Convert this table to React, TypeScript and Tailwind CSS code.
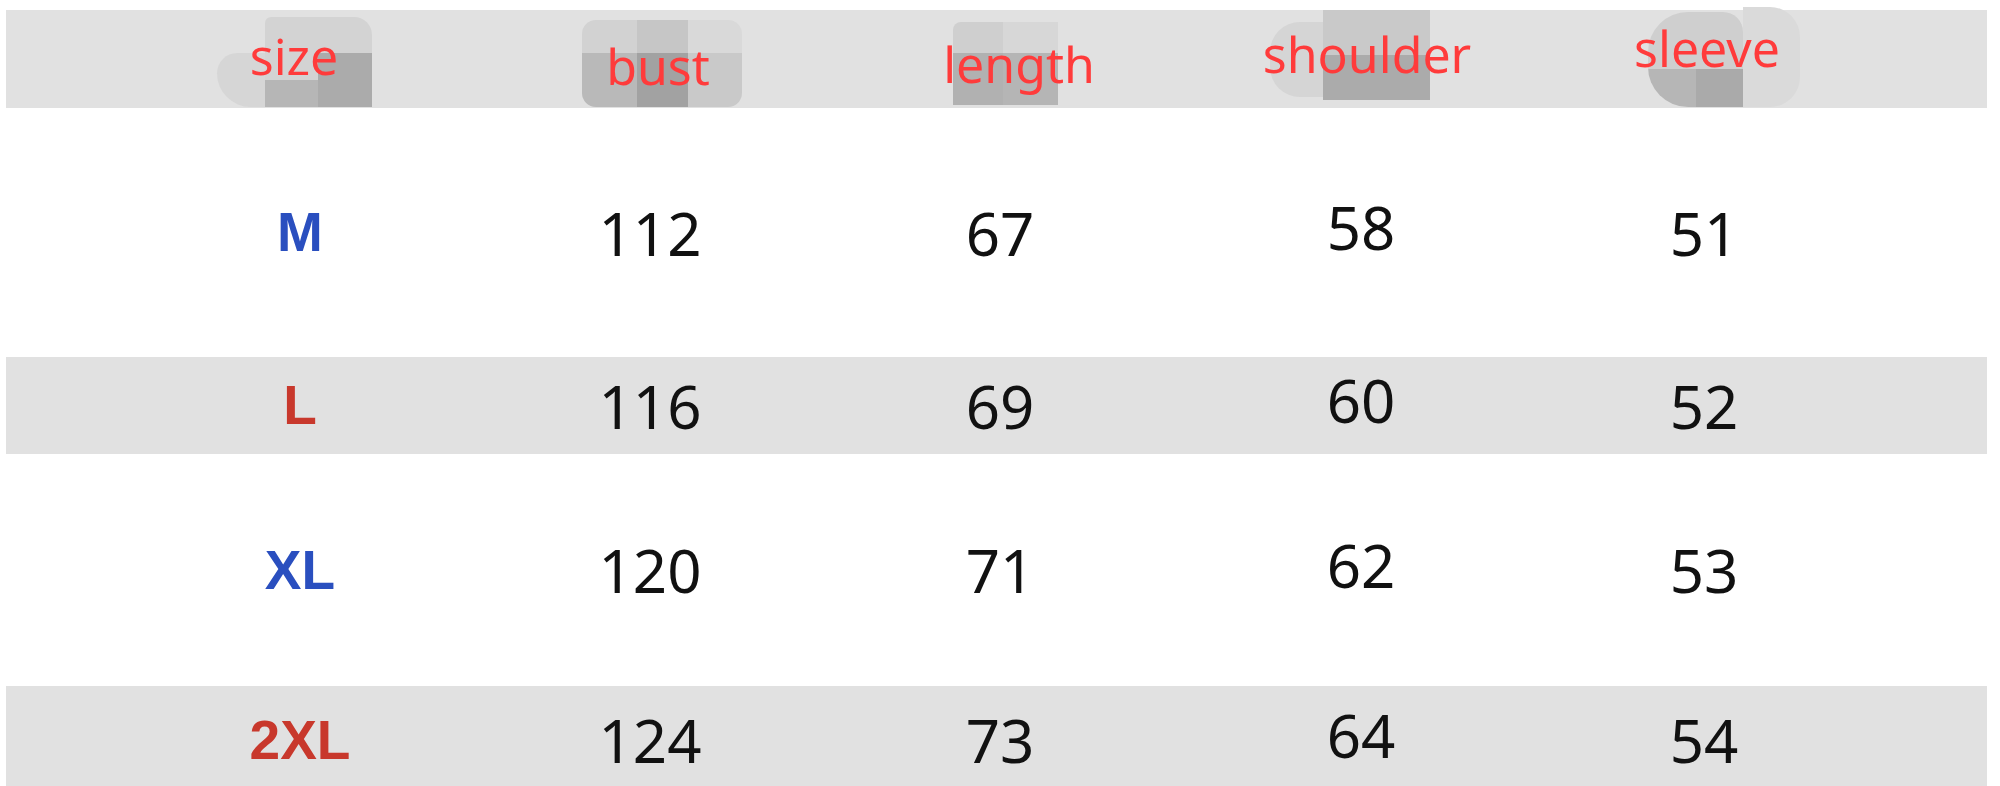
const rows = [
  { size: 'M', sizeColor: 'text-[#2a4fbf]', bg: 'bg-white', h: 'h-[249px]', vals: ['112', '67', '58', '51'] },
  { size: 'L', sizeColor: 'text-[#c8382c]', bg: 'bg-[#e1e1e1]', h: 'h-[97px]', vals: ['116', '69', '60', '52'] },
  { size: 'XL', sizeColor: 'text-[#2a4fbf]', bg: 'bg-white', h: 'h-[232px]', vals: ['120', '71', '62', '53'] },
  { size: '2XL', sizeColor: 'text-[#c8382c]', bg: 'bg-[#e1e1e1]', h: 'h-[108px]', vals: ['124', '73', '64', '54'] },
];

const headers = [
  { label: 'size', cls: 'pt-[21px] pr-[12px]' },
  { label: 'bust', cls: 'pt-[31px] pl-[16px]' },
  { label: 'length', cls: 'pt-[29px] pl-[38px]' },
  { label: 'shoulder', cls: 'pt-[19px] pl-[12px]' },
  { label: 'sleeve', cls: 'pt-[13px] pl-[6px]' },
];

const cols = 'grid grid-cols-[350px_350px_350px_372px_314px] pl-[119px]';

/** Blurred grey patches sitting behind the header labels */
function HeaderSmudges() {
  return (
    <div className="pointer-events-none absolute inset-0">
      {/* size */}
      <div className="absolute left-[211px] top-[43px] h-[54px] w-[60px] rounded-tl-[24px] rounded-bl-[40px] bg-[#d6d6d6]" />
      <div className="absolute left-[259px] top-[7px] h-[90px] w-[107px] rounded-tl-[6px] rounded-tr-[18px] bg-[#d3d3d3]" />
      <div className="absolute left-[259px] top-[70px] h-[27px] w-[53px] bg-[#b6b6b6]" />
      <div className="absolute left-[312px] top-[43px] h-[54px] w-[54px] bg-[#ababab]" />

      {/* bust */}
      <div className="absolute left-[576px] top-[10px] grid h-[87px] w-[160px] grid-cols-[55px_51px_54px] grid-rows-[33px_54px] overflow-hidden rounded-[14px]">
        <div className="bg-[#d2d2d2]" />
        <div className="bg-[#c6c6c6]" />
        <div className="bg-[#d9d9d9]" />
        <div className="bg-[#b9b9b9]" />
        <div className="bg-[#a2a2a2]" />
        <div className="bg-[#c9c9c9]" />
      </div>

      {/* length */}
      <div className="absolute left-[947px] top-[12px] grid h-[83px] w-[105px] grid-cols-[50px_55px] grid-rows-[31px_52px] overflow-hidden rounded-tl-[8px]">
        <div className="bg-[#cfcfcf]" />
        <div className="bg-[#d7d7d7]" />
        <div className="bg-[#b1b1b1]" />
        <div className="bg-[#b5b5b5]" />
      </div>

      {/* shoulder */}
      <div className="absolute left-[1264px] top-[12px] h-[75px] w-[60px] rounded-l-[30px] bg-[#d5d5d5]" />
      <div className="absolute left-[1317px] top-0 h-[45px] w-[107px] bg-[#c9c9c9]" />
      <div className="absolute left-[1317px] top-[45px] h-[45px] w-[107px] bg-[#ababab]" />

      {/* sleeve */}
      <div className="absolute left-[1737px] top-[-3px] h-[100px] w-[57px] rounded-r-[30px] bg-[#dadada]" />
      <div className="absolute left-[1642px] top-[2px] flex h-[95px] w-[95px] flex-col overflow-hidden rounded-l-[40px] rounded-tr-[20px]">
        <div className="h-[57px] bg-[#cfcfcf]" />
        <div className="flex flex-1">
          <div className="w-[48px] bg-[#b6b6b6]" />
          <div className="flex-1 bg-[#aaaaaa]" />
        </div>
      </div>
    </div>
  );
}

export default function App() {
  return (
    <div className="h-[786px] w-[2000px] overflow-hidden bg-white pt-[10px]">
      <div className="ml-[6px] w-[1981px]">
        {/* Header row */}
        <div className="relative h-[98px] bg-[#e1e1e1]">
          <HeaderSmudges />
          <div className={`relative h-full ${cols}`}>
            {headers.map(h => (
              <div
                key={h.label}
                className={`flex items-start justify-center font-['Noto_Sans',sans-serif] text-[50px] leading-none text-[#ff3b3b] ${h.cls}`}
              >
                {h.label}
              </div>
            ))}
          </div>
        </div>

        {/* Size rows */}
        {rows.map(r => (
          <div key={r.size} className={`${cols} ${r.bg} ${r.h}`}>
            <div
              className={`flex items-center justify-center font-['Liberation_Sans',Arial,sans-serif] text-[55px] font-bold leading-none ${r.sizeColor}`}
            >
              {r.size}
            </div>
            {r.vals.map((v, i) => (
              <div
                key={i}
                className={`flex items-center justify-center font-['Noto_Sans',sans-serif] text-[60px] leading-none text-[#111] ${i === 2 ? 'pb-[11px]' : ''}`}
              >
                {v}
              </div>
            ))}
          </div>
        ))}
      </div>
    </div>
  );
}
